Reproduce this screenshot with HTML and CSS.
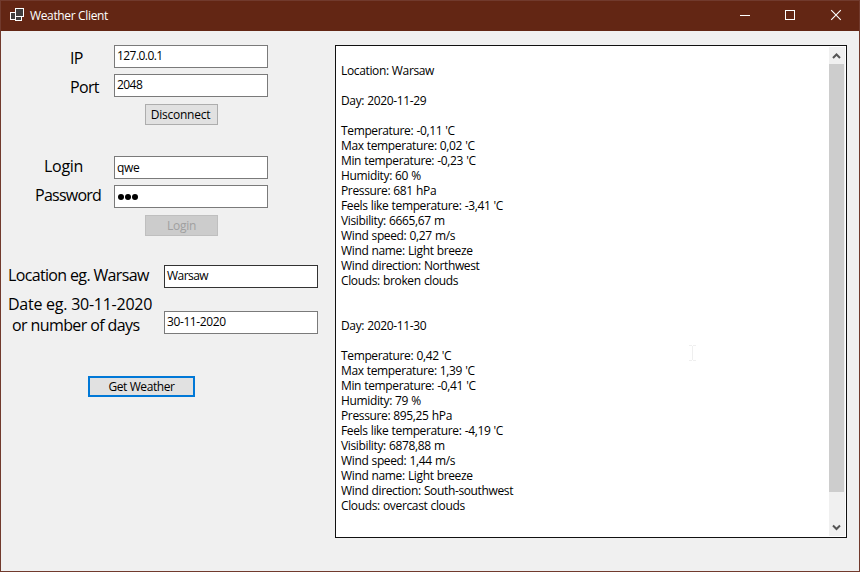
FILE: index.html
```
<!DOCTYPE html>
<html lang="en">
<head>
<meta charset="utf-8">
<title>Weather Client</title>
<link rel="stylesheet" href="styles.css">
</head>
<body>
<div class="window">
  <header class="titlebar">
    <svg class="app-icon" width="14" height="14" viewBox="0 0 14 14" fill="#3e3e3e" stroke="#fff" shape-rendering="crispEdges">
      <rect x=".5" y="4.5" width="6" height="7"/>
      <rect x="5.5" y="8.5" width="6" height="4"/>
      <rect x="5.5" y=".5" width="8" height="8"/>
    </svg>
    <span class="caption">Weather Client</span>
    <svg class="control" width="46" height="30" viewBox="0 0 46 30" stroke="#fff" shape-rendering="crispEdges"><path d="M19 14.5H29"/></svg>
    <svg class="control" width="46" height="30" viewBox="0 0 46 30" fill="none" stroke="#fff" shape-rendering="crispEdges"><rect x="18.5" y="9.5" width="9" height="9"/></svg>
    <svg class="control" width="46" height="30" viewBox="0 0 46 30" fill="none" stroke="#fff" stroke-width="1.1"><path d="M18.2 9.2L27.8 18.8M27.8 9.2L18.2 18.8"/></svg>
  </header>
  <main class="client">
    <form class="controls">
      <section class="connection">
        <div class="row"><span class="label ip">IP</span><div class="field">127.0.0.1</div></div>
        <div class="row"><span class="label port">Port</span><div class="field">2048</div></div>
        <div class="button"><span class="t-disconnect">Disconnect</span></div>
      </section>
      <section class="account">
        <div class="row"><span class="label login">Login</span><div class="field user">qwe</div></div>
        <div class="row"><span class="label password">Password</span><div class="field dots"><i></i><i></i><i></i></div></div>
        <div class="button disabled"><span>Login</span></div>
      </section>
      <section class="query">
        <div class="row"><span class="label location">Location eg. Warsaw</span><div class="field hover">Warsaw</div></div>
        <div class="row date-row"><span class="label date">Date eg. 30-11-2020<br><span class="days">or number of days</span></span><div class="field date-field">30-11-2020</div></div>
        <div class="button primary"><span>Get Weather</span></div>
      </section>
    </form>
    <div class="output">
      <div class="report"><pre class="text">

Location: Warsaw

Day: 2020-11-29

Temperature: -0,11 'C
Max temperature: 0,02 'C
Min temperature: -0,23 'C
Humidity: 60 %
Pressure: 681 hPa
Feels like temperature: -3,41 'C
Visibility: 6665,67 m
Wind speed: 0,27 m/s
Wind name: Light breeze
Wind direction: Northwest
Clouds: broken clouds


Day: 2020-11-30

Temperature: 0,42 'C
Max temperature: 1,39 'C
Min temperature: -0,41 'C
Humidity: 79 %
Pressure: 895,25 hPa
Feels like temperature: -4,19 'C
Visibility: 6878,88 m
Wind speed: 1,44 m/s
Wind name: Light breeze
Wind direction: South-southwest
Clouds: overcast clouds</pre></div>
      <div class="scrollbar">
        <svg width="16" height="17" viewBox="0 0 16 17" fill="none" stroke="#555" stroke-width="2"><path d="M4 11L7.5 7.5L11 11"/></svg>
        <div class="thumb"></div>
        <svg class="down" width="16" height="17" viewBox="0 0 16 17" fill="none" stroke="#555" stroke-width="2"><path d="M4 6.5L7.5 10L11 6.5"/></svg>
      </div>
      <svg class="ibeam" width="7" height="16" viewBox="0 0 7 16" fill="none" stroke="#efefef" shape-rendering="crispEdges"><path d="M0 .5H3M4 .5H7M3.5 1V15M0 15.5H3M4 15.5H7"/></svg>
    </div>
  </main>
</div>
</body>
</html>
```
FILE: styles.css
```
* { box-sizing: border-box; }
body {
  margin: 0;
  font: 12px/15px "Open Sans", "Noto Sans", sans-serif;
  color: #000;
}
.window {
  width: 860px;
  height: 572px;
  border: 1px solid #713a2d;
  background: #f0f0f0;
}
.titlebar {
  height: 30px;
  display: flex;
  align-items: center;
  background: #632614;
  color: #fff;
}
.app-icon { margin: 0 6px 2px 9px; }
.caption { flex: 1; padding-bottom: 1px; letter-spacing: -0.35px; }
.control { display: block; }
.client { display: flex; height: 540px; }
.controls { width: 334px; padding-top: 14px; }
.row { display: flex; height: 29px; }
.label {
  width: 113px;
  font-size: 16px;
  line-height: 21px;
  padding-top: 3px;
  letter-spacing: -0.65px;
  white-space: nowrap;
}
.ip, .port { padding-left: 69px; }
.login { padding-left: 43px; padding-top: 0; letter-spacing: -0.3px; }
.password { padding-left: 34px; padding-top: 0; letter-spacing: -0.75px; }
.field {
  width: 154px;
  height: 23px;
  padding: 2px 2px;
  border: 1px solid #7a7a7a;
  background: #fff;
  letter-spacing: -0.55px;
}
.user { padding-top: 3px; letter-spacing: -0.3px; }
.hover { border-color: #333; }
.dots { display: flex; gap: 1px; padding: 8px 3px; }
.dots i { width: 6px; height: 6px; border-radius: 50%; background: #000; }
.button {
  width: 73px;
  height: 21px;
  margin: 1px 0 0 144px;
  border: 1px solid #adadad;
  background: #e1e1e1;
  text-align: center;
  line-height: 19px;
  letter-spacing: -0.25px;
}
.t-disconnect { margin-left: -2px; }
.disabled { border-color: #bfbfbf; background: #ccc; color: #a0a0a0; }
.account { padding-top: 31px; }
.query { padding-top: 29px; }
.query .label { width: 163px; padding: 0 0 0 7px; }
.query .date { letter-spacing: -0.25px; }
.date-row { height: 82px; }
.days { padding-left: 4px; letter-spacing: -0.6px; }
.date-field { margin-top: 17px; letter-spacing: -0.4px; }
.primary {
  width: 107px;
  margin: 0 0 0 87px;
  border: 2px solid #0078d7;
  line-height: 17px;
  letter-spacing: -0.4px;
}
.output {
  position: relative;
  display: flex;
  width: 512px;
  height: 493px;
  margin-top: 14px;
  border: 1px solid #111;
  background: #fff;
}
.report { flex: 1; padding: 2px 0 0 5px; }
.text { margin: 0; font: inherit; letter-spacing: -0.36px; word-spacing: 0.4px; }
.scrollbar {
  width: 16px;
  height: 489px;
  margin: 1px 1px 0 0;
  display: flex;
  flex-direction: column;
  background: #f0f0f0;
}
.thumb { width: 15px; height: 428px; background: #cdcdcd; }
.down { margin-top: auto; }
.ibeam { position: absolute; left: 353px; top: 299px; }
```
